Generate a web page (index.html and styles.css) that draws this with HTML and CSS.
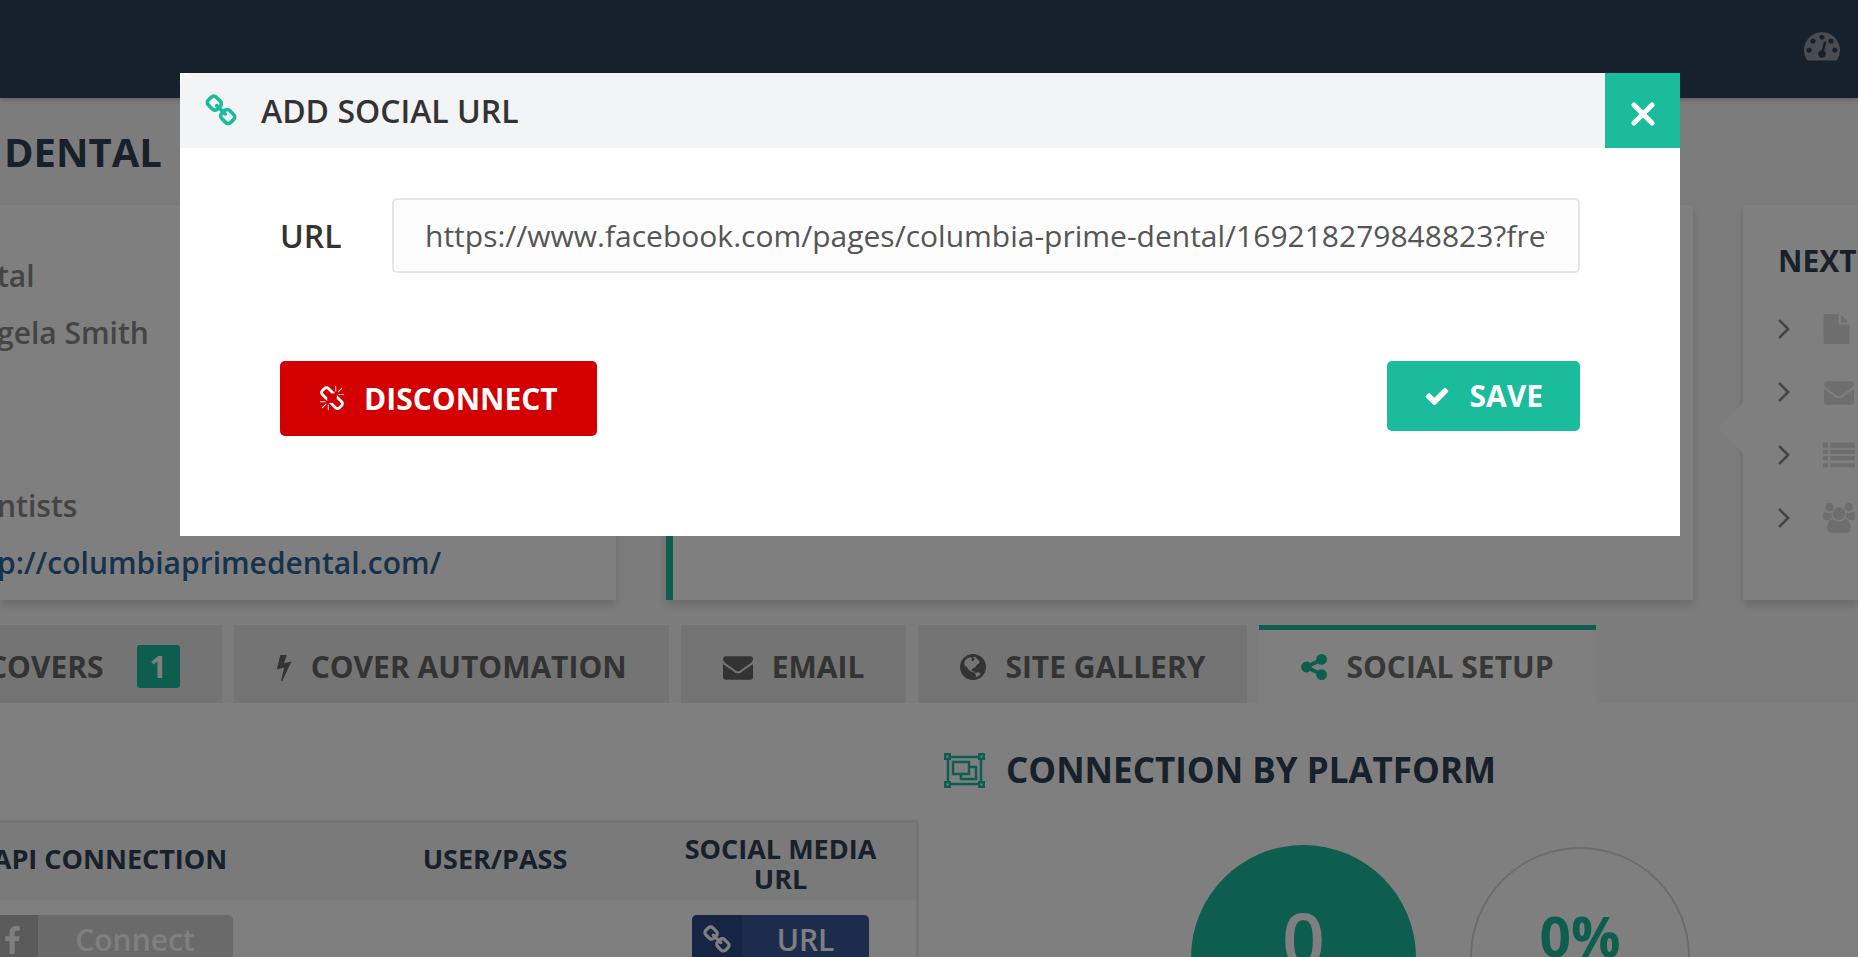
FILE: index.html
```html
<!DOCTYPE html>
<html lang="en">
<head>
<meta charset="utf-8">
<title>Social Setup</title>
<link rel="stylesheet" href="styles.css">
</head>
<body>
<svg class="sprite" aria-hidden="true">
  <symbol id="i-gauge" viewBox="0 0 1792 1792"><path d="M384 1152q0-53-37.5-90.5t-90.5-37.5-90.5 37.5-37.5 90.5 37.5 90.5 90.5 37.5 90.5-37.5 37.5-90.5zm192-448q0-53-37.5-90.5t-90.5-37.5-90.5 37.5-37.5 90.5 37.5 90.5 90.5 37.5 90.5-37.5 37.5-90.5zm428 481l101-382q6-26-7.5-48.5t-38.5-29.5-48 6.5-30 39.5l-101 382q-60 5-107 43.5t-63 98.5q-20 77 20 146t117 89 146-20 89-117q16-60-6-117t-72-91zm660-33q0-53-37.5-90.5t-90.5-37.5-90.5 37.5-37.5 90.5 37.5 90.5 90.5 37.5 90.5-37.5 37.5-90.5zm-640-640q0-53-37.5-90.5t-90.5-37.5-90.5 37.5-37.5 90.5 37.5 90.5 90.5 37.5 90.5-37.5 37.5-90.5zm448 192q0-53-37.5-90.5t-90.5-37.5-90.5 37.5-37.5 90.5 37.5 90.5 90.5 37.5 90.5-37.5 37.5-90.5zm320 448q0 261-141 483-19 29-54 29h-1402q-35 0-54-29-141-221-141-483 0-182 71-348t191-286 286-191 348-71 348 71 286 191 191 286 71 348z"/></symbol>
  <symbol id="i-chain" viewBox="0 0 1792 1792"><path d="M1520 1216q0-40-28-68l-208-208q-28-28-68-28-42 0-72 32 3 3 19 18.5t21.5 21.5 15 19 13 25.5 3.5 27.5q0 40-28 68t-68 28q-15 0-27.5-3.5t-25.5-13-19-15-21.5-21.5-18.5-19q-33 31-33 73 0 40 28 68l206 207q27 27 68 27 40 0 68-26l147-146q28-28 28-67zm-703-705q0-40-28-68l-206-207q-28-28-68-28-39 0-68 27l-147 146q-28 28-28 67 0 40 28 68l208 208q27 27 68 27 42 0 72-31-3-3-19-18.5t-21.5-21.5-15-19-13-25.5-3.5-27.5q0-40 28-68t68-28q15 0 27.5 3.5t25.5 13 19 15 21.5 21.5 18.5 19q33-31 33-73zm895 705q0 120-85 203l-147 146q-83 83-203 83-121 0-204-85l-206-207q-83-83-83-203 0-123 88-209l-88-88q-86 88-208 88-120 0-204-84l-208-208q-84-84-84-204t85-203l147-146q83-83 203-83 121 0 204 85l206 207q83 83 83 203 0 123-88 209l88 88q86-88 208-88 120 0 204 84l208 208q84 84 84 204z"/></symbol>
  <symbol id="i-unchain" viewBox="0 0 1792 1792"><path d="M503 1271l-256 256q-10 9-23 9-12 0-23-9-9-10-9-23t9-23l256-256q10-9 23-9t23 9q9 10 9 23t-9 23zm169 41v320q0 14-9 23t-23 9-23-9-9-23v-320q0-14 9-23t23-9 23 9 9 23zm-224-224q0 14-9 23t-23 9h-320q-14 0-23-9t-9-23 9-23 23-9h320q14 0 23 9t9 23zm1264 128q0 120-85 203l-147 146q-83 83-203 83-121 0-204-85l-334-335q-21-21-42-56l239-18 273 274q28 28 68 28t68-27l147-146q28-28 28-67 0-40-28-68l-274-275 18-239q35 21 56 42l336 336q84 86 84 204zm-617-724l-239 18-273-274q-28-28-68-28-39 0-68 27l-147 146q-28 28-28 67 0 40 28 68l274 274-18 240q-35-21-56-42l-336-336q-84-86-84-204 0-120 85-203l147-146q83-83 203-83 121 0 204 85l334 335q21 21 42 56zm633 84q0 14-9 23t-23 9h-320q-14 0-23-9t-9-23 9-23 23-9h320q14 0 23 9t9 23zm-544-544v320q0 14-9 23t-23 9-23-9-9-23v-320q0-14 9-23t23-9 23 9 9 23zm407 151l-256 256q-11 9-23 9t-23-9q-9-10-9-23t9-23l256-256q10-9 23-9t23 9q9 10 9 23t-9 23z"/></symbol>
  <symbol id="i-check" viewBox="0 0 1792 1792"><path d="M1671 566q0 40-28 68l-724 724-136 136q-28 28-68 28t-68-28l-136-136-362-362q-28-28-28-68t28-68l136-136q28-28 68-28t68 28l294 295 656-657q28-28 68-28t68 28l136 136q28 28 28 68z"/></symbol>
  <symbol id="i-mail" viewBox="0 0 1792 1792"><path d="M1792 710v794q0 66-47 113t-113 47h-1472q-66 0-113-47t-47-113v-794q44 49 101 87 362 246 497 345 57 42 92.5 65.5t94.5 48 110 24.5h2q51 0 110-24.5t94.5-48 92.5-65.5q170-123 498-345 57-39 100-87zm0-294q0 79-49 151t-122 123q-376 261-468 325-10 7-42.5 31t-54 38.5-52 32.5-57.5 27-50 9h-2q-23 0-50-9t-57.5-27-52-32.5-54-38.5-42.5-31q-91-64-262-182.5t-205-142.5q-62-42-117-115.5t-55-136.5q0-78 41.5-130t118.5-52h1472q65 0 112.5 47t47.5 113z"/></symbol>
  <symbol id="i-bolt" viewBox="448 0 896 1792"><path d="M1333 566q18 20 7 44l-540 1157q-13 25-42 25-4 0-14-2-17-5-25.5-19t-4.5-30l197-808-406 101q-4 1-12 1-18 0-31-11-18-15-13-39l201-825q4-14 16-23t28-9h328q19 0 32 12.5t13 29.5q0 8-5 18l-171 463 396-98q8-2 12-2 19 0 34 15z"/></symbol>
  <symbol id="i-share" viewBox="128 128 1536 1536"><path d="M1344 1024q133 0 226.5 93.5t93.5 226.5-93.5 226.5-226.5 93.5-226.5-93.5-93.5-226.5q0-12 2-34l-360-180q-92 86-218 86-133 0-226.5-93.5t-93.5-226.5 93.5-226.5 226.5-93.5q126 0 218 86l360-180q-2-22-2-34 0-133 93.5-226.5t226.5-93.5 226.5 93.5 93.5 226.5-93.5 226.5-226.5 93.5q-126 0-218-86l-360 180q2 22 2 34t-2 34l360 180q92-86 218-86z"/></symbol>
  <symbol id="i-angle" viewBox="589 448 582 1024"><path d="M1171 960q0 13-10 23l-466 466q-10 10-23 10t-23-10l-50-50q-10-10-10-23t10-23l393-393-393-393q-10-10-10-23t10-23l50-50q10-10 23-10t23 10l466 466q10 10 10 23z"/></symbol>
  <symbol id="i-file" viewBox="128 0 1536 1792"><path d="M1152 512v-472q22 14 36 28l408 408q14 14 28 36h-472zm-128 32q0 40 28 68t68 28h544v1056q0 40-28 68t-68 28h-1344q-40 0-68-28t-28-68v-1600q0-40 28-68t68-28h800v544z"/></symbol>
  <symbol id="i-users" viewBox="0 0 1920 1792"><path d="M593 896q-162 5-265 128h-134q-82 0-138-40.5t-56-118.5q0-353 124-353 6 0 43.5 21t97.5 42.5 119 21.5q67 0 133-23-5 37-5 66 0 139 81 256zm1071 637q0 120-73 189.5t-194 69.5h-874q-121 0-194-69.5t-73-189.5q0-53 3.5-103.5t14-109 26.5-108.5 43-97.5 62-81 85.5-53.5 111.5-20q10 0 43 21.5t73 48 107 48 135 21.5 135-21.5 107-48 73-48 43-21.5q61 0 111.5 20t85.5 53.5 62 81 43 97.5 26.5 108.5 14 109 3.5 103.5zm-1024-1277q0 106-75 181t-181 75-181-75-75-181 75-181 181-75 181 75 75 181zm704 384q0 159-112.5 271.5t-271.5 112.5-271.5-112.5-112.5-271.5 112.5-271.5 271.5-112.5 271.5 112.5 112.5 271.5zm576 225q0 78-56 118.5t-138 40.5h-134q-103-123-265-128 81-117 81-256 0-29-5-66 66 23 133 23 59 0 119-21.5t97.5-42.5 43.5-21q124 0 124 353zm-128-609q0 106-75 181t-181 75-181-75-75-181 75-181 181-75 181 75 75 181z"/></symbol>
  <symbol id="i-facebook" viewBox="479 0 864 1664"><path d="M1343 12v264h-157q-86 0-116 36t-30 108v189h293l-39 296h-254v759h-306v-759h-255v-296h255v-218q0-186 104-288.5t277-102.5q147 0 228 12z"/></symbol>
  <symbol id="i-list" viewBox="0 0 31 24"><path d="M0 0h5v5H0zM7 0h24v5H7zM0 7h5v4H0zM7 7h24v4H7zM0 13h5v4H0zM7 13h24v4H7zM0 20h5v4H0zM7 20h24v4H7z"/></symbol>
  <symbol id="i-globe" viewBox="0 0 26 26"><path fill-rule="evenodd" d="M13 0a13 13 0 1 0 0 26a13 13 0 0 0 0-26zM4.500 7L7 4.500L10.500 3.200L12 4.500L11.500 6.500L13.500 7L14.500 5L13 3.500L14.500 2.700L17 4.500L19.500 7.500L19 9.500L17 10.500L15.500 13L13 14.200L11.500 15.500L12 17L15.500 18L14.500 18.700L11.500 17.800L8.500 15.500L6.500 12.500L4.500 11.500zM15 19.200L17.500 18.300L20.500 19L19.500 21.500L15.500 23.500L16 21.500z"/></symbol>
  <symbol id="i-group" viewBox="0 0 41 35"><path fill="none" stroke="currentColor" stroke-width="2.5" d="M1.250 1.250h4.500v4.500h-4.500zM35.250 1.250h4.500v4.500h-4.500zM1.250 29.250h4.500v4.500h-4.500zM35.250 29.250h4.500v4.500h-4.500zM7 4h27M7 31h27M4 6v23M37 6v23M9 9h16v12H9zM25 14h7v12H17v-5"/></symbol>
  <symbol id="i-close" viewBox="0 0 24 26"><path fill="none" stroke="currentColor" stroke-width="5" stroke-linecap="round" d="M3 4l18 18M21 4L3 22"/></symbol>
</svg>

<div class="page">
  <nav class="navbar">
    <a class="navbar-link" href="#" aria-label="Dashboard"><svg class="icon icon-36"><use href="#i-gauge"/></svg></a>
  </nav>

  <header class="title-bar"><h1 class="title">DENTAL</h1></header>

  <section class="cards">
    <div class="card card-info">
      <span>tal</span>
      <span>gela Smith</span>
      <span></span>
      <span></span>
      <span>ntists</span>
      <a class="site-link" href="#">p://columbiaprimedental.com/</a>
    </div>
    <div class="card card-main"></div>
    <div class="card card-next">
      <h2 class="next-title">NEXT</h2>
      <ul class="next-list">
        <li class="next-item"><svg class="next-angle"><use href="#i-angle"/></svg><svg class="next-icon next-file"><use href="#i-file"/></svg></li>
        <li class="next-item"><svg class="next-angle"><use href="#i-angle"/></svg><svg class="next-icon"><use href="#i-mail"/></svg></li>
        <li class="next-item"><svg class="next-angle"><use href="#i-angle"/></svg><svg class="next-icon"><use href="#i-list"/></svg></li>
        <li class="next-item"><svg class="next-angle"><use href="#i-angle"/></svg><svg class="next-icon"><use href="#i-users"/></svg></li>
      </ul>
    </div>
  </section>

  <div class="tabs">
    <button class="tab tab-first" type="button">COVERS <span class="count">1</span></button>
    <button class="tab" type="button"><svg class="icon icon-bolt"><use href="#i-bolt"/></svg>COVER AUTOMATION</button>
    <button class="tab" type="button"><svg class="icon icon-30"><use href="#i-mail"/></svg>EMAIL</button>
    <button class="tab" type="button"><svg class="icon icon-26"><use href="#i-globe"/></svg>SITE GALLERY</button>
    <button class="tab tab-active" type="button"><svg class="icon icon-26"><use href="#i-share"/></svg>SOCIAL SETUP</button>
  </div>

  <main class="panel">
    <section class="accounts">
      <table class="table">
        <thead>
          <tr><th class="col-api">API CONNECTION</th><th class="col-user">USER/PASS</th><th class="col-url">SOCIAL MEDIA URL</th></tr>
        </thead>
        <tbody>
          <tr>
            <td><button class="split split-off" type="button"><span class="split-icon"><svg class="icon icon-fb"><use href="#i-facebook"/></svg></span><span class="split-text">Connect</span></button></td>
            <td></td>
            <td><button class="split split-url" type="button"><span class="split-icon"><svg class="icon icon-30"><use href="#i-chain"/></svg></span><span class="split-text">URL</span></button></td>
          </tr>
        </tbody>
      </table>
    </section>
    <section class="platform">
      <h2 class="platform-title"><svg class="icon icon-group"><use href="#i-group"/></svg>CONNECTION BY PLATFORM</h2>
      <div class="stats">
        <div class="stat stat-total">0</div>
        <div class="stat stat-share">0%</div>
      </div>
    </section>
  </main>
</div>

<div class="overlay">
  <div class="modal" role="dialog" aria-labelledby="modal-title">
    <div class="modal-head">
      <svg class="icon icon-34"><use href="#i-chain"/></svg>
      <h2 class="modal-title" id="modal-title">ADD SOCIAL URL</h2>
      <button class="close" type="button" aria-label="Close"><svg class="icon icon-close"><use href="#i-close"/></svg></button>
    </div>
    <form class="modal-body">
      <div class="field">
        <label class="label" for="url">URL</label>
        <input class="input" id="url" type="text" value="https://www.facebook.com/pages/columbia-prime-dental/169218279848823?fref=ts">
      </div>
      <div class="actions">
        <button class="btn btn-danger" type="button"><svg class="icon icon-26"><use href="#i-unchain"/></svg>DISCONNECT</button>
        <button class="btn btn-save" type="button"><svg class="icon icon-26"><use href="#i-check"/></svg>SAVE</button>
      </div>
    </form>
  </div>
</div>
</body>
</html>
```
FILE: styles.css
```css
* { box-sizing: border-box; }

body {
  margin: 0;
  height: 100vh;
  overflow: hidden;
  background: #f8f8f8;
  color: #666;
  font: 600 30px/40px "Open Sans", sans-serif;
}

h1, h2, ul { margin: 0; padding: 0; list-style: none; }
button, input { font: inherit; color: inherit; border: 0; margin: 0; }
.sprite { position: absolute; width: 0; height: 0; }

.icon { flex: none; fill: currentColor; }
.icon-26 { width: 26px; height: 26px; }
.icon-30 { width: 30px; height: 30px; }
.icon-34 { width: 34px; height: 34px; }
.icon-36 { width: 36px; height: 36px; }
.icon-bolt { width: 16px; height: 28px; }
.icon-fb { width: 15px; height: 28px; }
.icon-group { width: 41px; height: 35px; }
.icon-close { width: 24px; height: 26px; }

.page { height: 100vh; overflow: hidden; }

/* Top bar */
.navbar {
  position: relative;
  display: flex;
  align-items: center;
  justify-content: flex-end;
  height: 98px;
  padding: 0 18px 8px;
  background: #2f4256;
  box-shadow: 0 1px 5px rgba(0, 0, 0, .3);
}
.navbar-link { display: flex; color: #9299a2; }

.title-bar { padding: 29px 4px 28px; }
.title { color: #2f4256; font-size: 40px; line-height: 50px; font-weight: 700; }

/* Cards */
.cards { display: flex; gap: 50px; height: 395px; }
.card { background: #fff; box-shadow: 0 5px 8px rgba(0, 0, 0, .14); }
.card-info {
  display: flex;
  flex-direction: column;
  justify-content: space-between;
  width: 616px;
  padding: 51px 0 17px;
  text-indent: -3px;
  color: #888;
}
.card-info span { min-height: 40px; }
.site-link { color: #2f6496; text-decoration: none; }
.card-main { flex: 1; border-left: 7px solid #1abc9c; }
.card-next { position: relative; width: 115px; padding: 36px 0 0 35px; }
.card-next::before {
  content: "";
  position: absolute;
  top: 198px;
  left: -25px;
  border: 25px solid transparent;
  border-left-width: 0;
  border-right-color: #fff;
}
.next-title { color: #2f4256; font-size: 30px; line-height: 40px; font-weight: 700; }
.next-list { padding-top: 16px; }
.next-item { display: flex; align-items: center; gap: 33px; height: 63px; }
.next-angle { flex: none; width: 12px; height: 20px; fill: #888; }
.next-icon { flex: none; width: 32px; height: 30px; fill: #ddd; }
.next-file { width: 27px; }

/* Tabs */
.tabs { display: flex; gap: 12px; padding-top: 25px; }
.tab {
  display: flex;
  align-items: center;
  gap: 19px;
  height: 78px;
  padding: 5px 42px 0;
  background: #e8e8e8;
  color: #666;
  font-weight: 700;
  white-space: nowrap;
}
.tab-first { gap: 33px; margin-left: -12px; padding-left: 0; }
.count {
  width: 43px;
  border-radius: 3px;
  background: #1abc9c;
  color: #fff;
  line-height: 43px;
}
.tab-active { background: #fff; box-shadow: inset 0 5px #1abc9c; color: #707070; }
.tab-active .icon { color: #1abc9c; }

/* Panel */
.panel { display: flex; height: 400px; background: #fff; }
.accounts { width: 919px; padding-top: 117px; }
.table {
  width: 1044px;
  margin-left: -125px;
  border-spacing: 0;
  table-layout: fixed;
  border-top: 3px solid #e8e8e8;
  border-right: 3px solid #e8e8e8;
}
.table th {
  height: 77px;
  padding: 0 30px 6px;
  background: #f4f4f4;
  color: #2f4256;
  font-size: 27px;
  line-height: 30px;
  font-weight: 700;
}
.table .col-api { width: 470px; }
.table .col-user { width: 300px; }
.table .col-url { padding: 4px 30px 0; }
.table td { padding: 15px 0; text-align: center; }
.split {
  display: inline-flex;
  width: 245px;
  height: 50px;
  padding: 0;
  border-radius: 5px;
  overflow: hidden;
  background: #d4d4d4;
  color: #fff;
}
.split-icon { display: flex; align-items: center; justify-content: center; width: 50px; height: 50px; background: #b4b4b4; }
.split-text { flex: 1; line-height: 50px; }
.split-url { width: 177px; background: #3b5998; }
.split-url .split-icon { background: #2f4b8b; }

.platform { flex: 1; padding: 42px 25px; }
.platform-title { display: flex; align-items: center; gap: 21px; color: #2f4256; font-size: 35px; line-height: 50px; font-weight: 700; }
.icon-group { color: #1abc9c; }
.stats { display: flex; gap: 54px; padding: 50px 0 0 247px; }
.stat { border-radius: 50%; text-align: center; font-weight: 600; }
.stat-total { width: 225px; height: 225px; background: #1abc9c; color: #fff; font-size: 75px; line-height: 186px; }
.stat-share { width: 220px; height: 220px; margin-top: 2px; border: 2px solid #d8d8d8; color: #1abc9c; font-size: 55px; line-height: 174px; font-weight: 700; }

/* Dialog */
.overlay {
  position: fixed;
  inset: 0;
  z-index: 10;
  padding: 73px 0 0 2px;
  background: rgba(0, 0, 0, .5);
}
.modal { width: 1500px; max-width: 100%; margin: 0 auto; background: #fff; color: #333; }
.modal-head { display: flex; align-items: center; gap: 23px; height: 75px; padding-left: 24px; background: #f3f4f6; border-radius: 12px 0 0; }
.modal-head .icon-34 { color: #1abc9c; }
.modal-title { flex: 1; font-size: 32px; line-height: 40px; font-weight: 600; }
.close { display: flex; align-items: center; justify-content: center; width: 75px; height: 75px; padding: 6px 0 0; background: #1abc9c; color: #fff; }
.modal-body { padding: 50px 100px 100px; }
.field { display: flex; align-items: center; }
.label { width: 112px; font-size: 32px; font-weight: 600; }
.input {
  flex: 1;
  min-width: 0;
  height: 75px;
  padding: 0 31px;
  border: 2px solid #e6e6e6;
  border-radius: 5px;
  background: #fdfdfd;
  color: #555;
  font-weight: 400;
}
.actions { display: flex; align-items: flex-start; justify-content: space-between; padding-top: 88px; }
.btn { display: flex; align-items: center; gap: 19px; padding: 0 39px; border-radius: 5px; color: #fff; font-weight: 700; }
.btn-danger { height: 75px; background: #d20000; }
.btn-save { height: 70px; padding: 0 37px; background: #1abc9c; }
```
